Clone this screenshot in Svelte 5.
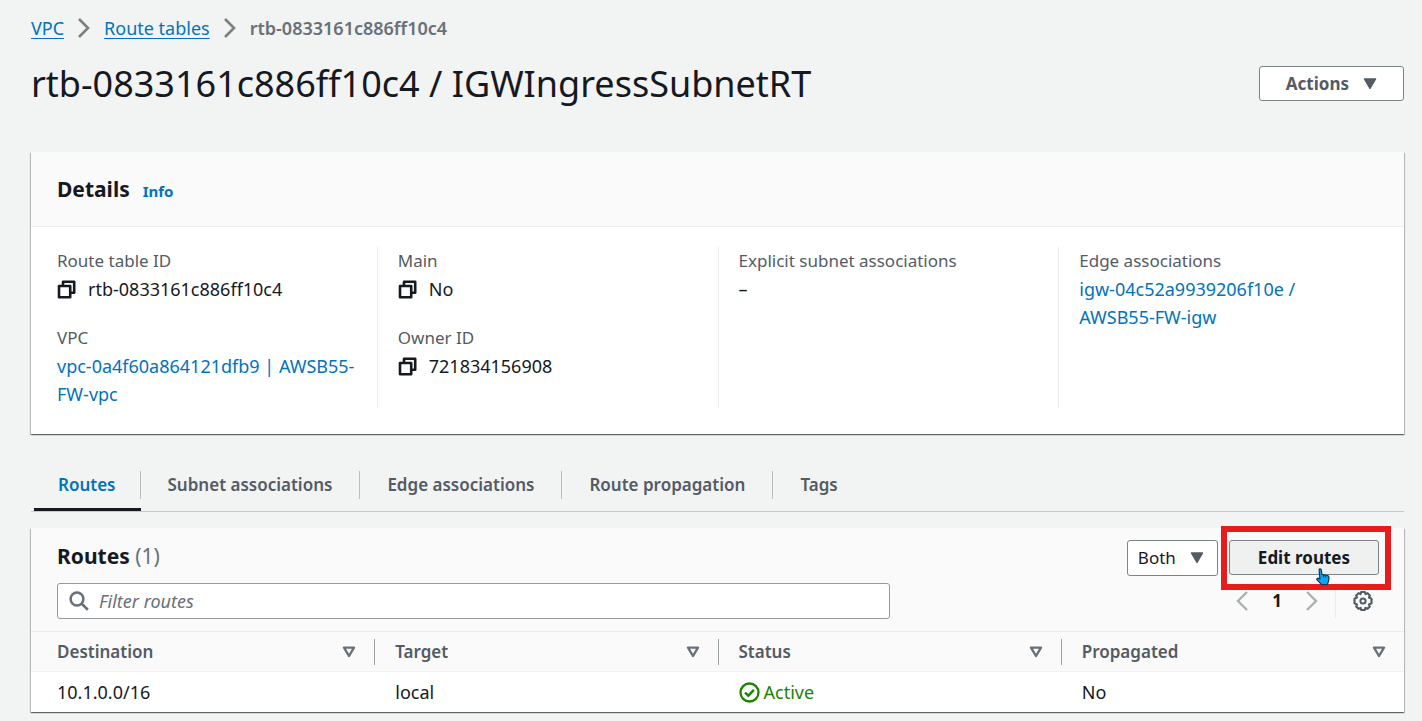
<script>
  const tabs = ['Routes', 'Subnet associations', 'Edge associations', 'Route propagation', 'Tags'];
  const columns = ['Destination', 'Target', 'Status', 'Propagated'];
  let active = $state('Routes');
  let direction = $state('Both');
  let filter = $state('');
</script>

{#snippet chevron()}
  <svg class="chevron" width="12" height="20" viewBox="0 0 12 20" aria-hidden="true"><path d="M1 1l9 9-9 9" fill="none" stroke="#7a8082" stroke-width="2.6" /></svg>
{/snippet}

{#snippet caret()}
  <svg class="caret" width="14" height="12" viewBox="0 0 14 12" aria-hidden="true"><path d="M1.4 1h11.2L7 10.4z" fill="#545b64" stroke="#545b64" stroke-width="1.4" stroke-linejoin="round" /></svg>
{/snippet}

{#snippet copy(label)}
  <button class="copy" aria-label={label}>
    <svg width="19" height="19" viewBox="0 0 19 19" aria-hidden="true">
      <path d="M6 5V1.800h11.200v11H14M2 6h11.200v11.200H2z" fill="none" stroke="#16191f" stroke-width="2.600" stroke-linejoin="round" />
    </svg>
  </button>
{/snippet}

<main>
  <nav class="crumbs" aria-label="Breadcrumb">
    <a href="#vpc">VPC</a>
    {@render chevron()}
    <a href="#route-tables">Route tables</a>
    {@render chevron()}
    <span>rtb-0833161c886ff10c4</span>
  </nav>

  <header class="title">
    <h1>rtb-0833161c886ff10c4 / IGWIngressSubnetRT</h1>
    <button class="button actions">Actions {@render caret()}</button>
  </header>

  <section class="card">
    <div class="card-head">
      <h2>Details</h2>
      <a class="info" href="#info">Info</a>
    </div>
    <div class="details">
      <dl>
        <div>
          <dt>Route table ID</dt>
          <dd class="copyable">{@render copy('Copy route table ID')}rtb-0833161c886ff10c4</dd>
        </div>
        <div>
          <dt>VPC</dt>
          <dd><a href="#vpc-id">vpc-0a4f60a864121dfb9 | AWSB55-<wbr />FW-vpc</a></dd>
        </div>
      </dl>
      <dl>
        <div>
          <dt>Main</dt>
          <dd class="copyable">{@render copy('Copy main')}No</dd>
        </div>
        <div>
          <dt>Owner ID</dt>
          <dd class="copyable">{@render copy('Copy owner ID')}721834156908</dd>
        </div>
      </dl>
      <dl>
        <div>
          <dt>Explicit subnet associations</dt>
          <dd>–</dd>
        </div>
      </dl>
      <dl>
        <div>
          <dt>Edge associations</dt>
          <dd><a href="#igw">igw-04c52a9939206f10e /<br />AWSB55-FW-igw</a></dd>
        </div>
      </dl>
    </div>
  </section>

  <div class="tabs" role="tablist">
    {#each tabs as tab}
      <button role="tab" aria-selected={active === tab} class:active={active === tab} onclick={() => (active = tab)}><span>{tab}</span></button>
    {/each}
  </div>

  <section class="card">
    <div class="tools">
      <h2>Routes <span class="count">(1)</span></h2>
      <div class="controls">
        <div class="select">
          <select bind:value={direction} aria-label="Routes shown">
            <option>Both</option>
            <option>Edge</option>
          </select>
          {@render caret()}
        </div>
        <div class="marked">
          <button class="button edit">Edit routes</button>
          <div class="frame"></div>
          <svg class="pointer" width="14" height="18" viewBox="0 0 14 18" aria-hidden="true">
            <path d="M3.1 1.8c0-1.4 2-1.4 2.2 0l.6 4.6 5.6 1.1c1.2.3 1.6 1 1.5 2.1l-.6 4.2-1.2 2.9H5.6L1.1 11.9c-.8-1 .2-2 1.3-1.6l1.5.9z" fill="#0aa5f5" stroke="#12384f" stroke-width="1.2" stroke-linejoin="round" />
            <path d="M7.6 7v2.4M9.8 7.4v2.2" stroke="#12384f" stroke-width=".9" />
          </svg>
        </div>
      </div>
    </div>
    <div class="filter-row">
      <label class="filter">
        <svg width="20" height="20" viewBox="0 0 20 20" aria-hidden="true"><circle cx="8" cy="8" r="6.4" fill="none" stroke="#687078" stroke-width="2.5" /><path d="M12.6 12.6l6.2 6.2" stroke="#687078" stroke-width="2.7" /></svg>
        <input type="text" placeholder="Filter routes" aria-label="Filter routes" bind:value={filter} />
      </label>
      <div class="pager">
        <button aria-label="Previous page"><svg width="12" height="20" viewBox="0 0 12 20"><path d="M11 1l-9 9 9 9" fill="none" stroke="#aab1b3" stroke-width="2.4" /></svg></button>
        <span>1</span>
        <button aria-label="Next page"><svg width="12" height="20" viewBox="0 0 12 20"><path d="M1 1l9 9-9 9" fill="none" stroke="#aab1b3" stroke-width="2.4" /></svg></button>
        <button class="gear" aria-label="Preferences">
          <svg width="22" height="22" viewBox="0 0 22 22">
            <path d="M9.2 2h3.6l.6 2 2.1-.8 2.3 2.3-.8 2.1 2.5 1.1v4.6l-2.5 1.1.8 2.1-2.3 2.3-2.1-.8-.6 2H9.2l-.6-2-2.1.8-2.3-2.3.8-2.1-2.5-1.1V8.7l2.5-1.1-.8-2.1 2.3-2.3 2.1.8z" fill="none" stroke="#545b64" stroke-width="2.2" stroke-linejoin="round" />
            <circle cx="11" cy="11" r="2.6" fill="none" stroke="#545b64" stroke-width="2" />
          </svg>
        </button>
      </div>
    </div>
    <table>
      <thead>
        <tr>
          {#each columns as column}
            <th scope="col">
              <div class="th">
                {column}
                <svg width="14" height="12" viewBox="0 0 14 12" aria-hidden="true"><path d="M2 1.6h10L7 10z" fill="none" stroke="#687078" stroke-width="2.4" stroke-linejoin="round" /></svg>
              </div>
            </th>
          {/each}
        </tr>
      </thead>
      <tbody>
        <tr>
          <td>10.1.0.0/16</td>
          <td>local</td>
          <td>
            <span class="status">
              <svg width="21" height="21" viewBox="0 0 21 21" aria-hidden="true"><circle cx="10.5" cy="10.5" r="9" fill="none" stroke="#1d8102" stroke-width="2.3" /><path d="M6 10.5l3.3 3.2 5.6-5.8" fill="none" stroke="#1d8102" stroke-width="2.4" /></svg>
              Active
            </span>
          </td>
          <td>No</td>
        </tr>
      </tbody>
    </table>
  </section>
</main>

<style>
  :global(body) {
    margin: 0;
    background: #f2f3f3;
  }
  main {
    box-sizing: border-box;
    padding: 14px 18px 8px 31px;
    font: 17px/28px 'Noto Sans', sans-serif;
    color: #16191f;
  }
  svg {
    display: block;
    flex: none;
  }
  a {
    color: #0073bb;
    text-decoration: none;
  }
  h1,
  h2,
  dl,
  dd {
    margin: 0;
  }
  button,
  select,
  input {
    font: inherit;
    color: inherit;
  }
  button {
    padding: 0;
    border: 0;
    background: none;
    cursor: pointer;
  }
  .crumbs,
  dd,
  td,
  .filter {
    font-size: 18px;
  }
  .crumbs {
    display: flex;
    align-items: center;
    gap: 14px;
  }
  .crumbs a {
    text-decoration: underline;
    text-underline-offset: 3px;
  }
  .crumbs span {
    font-weight: 600;
    color: #687078;
  }
  .title {
    display: flex;
    justify-content: space-between;
    align-items: center;
    margin: 18px 0 45px;
  }
  h1 {
    font-size: 36px;
    line-height: 47px;
    font-weight: 400;
  }
  h2 {
    font-size: 21px;
    line-height: 28px;
    font-weight: 700;
  }
  .button {
    display: flex;
    align-items: center;
    justify-content: center;
    box-sizing: border-box;
    height: 35px;
    padding: 0 26px;
    border: 1px solid #7d8488;
    border-radius: 3px;
    background: #fff;
    font-weight: 700;
    color: #545b64;
    gap: 14px;
  }
  .card {
    background: #fff;
    box-shadow: 0 1px 1px #00000060, 1px 1px 1px #00000030, -1px 1px 1px #00000030;
  }
  .card-head {
    display: flex;
    align-items: baseline;
    gap: 13px;
    padding: 23px 26px 21px;
    background: #fafafa;
    border-bottom: 1px solid #eaeded;
  }
  .info {
    font-size: 15px;
    font-weight: 700;
  }
  .details {
    display: grid;
    grid-template-columns: repeat(4, 1fr);
    padding: 20px 5px 26px;
  }
  dl {
    display: grid;
    align-content: start;
    gap: 21px;
    padding: 0 20px;
    border-left: 1px solid #eaeded;
  }
  dl:first-child {
    border-color: transparent;
  }
  dt {
    color: #545b64;
  }
  .copyable {
    display: flex;
    align-items: center;
    gap: 12px;
  }
  .tabs {
    display: flex;
    margin-top: 24px;
    padding: 0 3px;
    border-bottom: 1px solid #c5cacb;
  }
  .tabs button {
    padding: 13px 0 9px;
    border-bottom: 3px solid transparent;
    font-weight: 600;
    color: #545b64;
  }
  .tabs span {
    display: block;
    padding: 0 27px;
    border-right: 1px solid #b9bfc0;
  }
  .tabs button:first-child span {
    padding: 0 24px;
  }
  .tabs button:last-child span {
    border: 0;
  }
  .tabs .active {
    color: #0073bb;
    border-color: #16191f;
  }
  .tabs + .card {
    margin-top: 16px;
  }
  .tools,
  .filter-row {
    display: flex;
    justify-content: space-between;
    background: #fafafa;
    padding: 12px 25px 7px 26px;
  }
  .tools h2 {
    padding-top: 2px;
  }
  .count {
    font-weight: 400;
    color: #687078;
  }
  .controls {
    display: flex;
    gap: 11px;
  }
  .select {
    display: grid;
    align-items: center;
  }
  .select > :global(*) {
    grid-area: 1 / 1;
  }
  select {
    appearance: none;
    box-sizing: border-box;
    width: 91px;
    height: 36px;
    padding: 0 10px;
    border: 1px solid #7d8488;
    border-radius: 3px;
    background: #fff;
  }
  .select .caret {
    justify-self: end;
    margin-right: 14px;
    pointer-events: none;
  }
  .marked {
    position: relative;
  }
  .edit {
    padding: 0 28px;
    background: #eff0f0;
    color: #16191f;
  }
  .frame {
    position: absolute;
    inset: -14px -12px -14px -8px;
    border: 6px solid #e81b1d;
    pointer-events: none;
  }
  .pointer {
    position: absolute;
    left: 87px;
    top: 28px;
    pointer-events: none;
  }
  .filter-row {
    align-items: center;
    padding: 0 25px 12px 26px;
    border-bottom: 1px solid #eaeded;
  }
  .filter {
    display: flex;
    align-items: center;
    gap: 10px;
    box-sizing: border-box;
    width: 63%;
    height: 36px;
    padding: 0 11px;
    border: 1px solid #949a9d;
    border-radius: 3px;
    background: #fff;
  }
  input {
    flex: 1;
    min-width: 0;
    padding: 0;
    border: 0;
    outline: 0;
    background: none;
  }
  input::placeholder {
    color: #687078;
    font-style: italic;
    opacity: 1;
  }
  .pager {
    display: flex;
    align-items: center;
    gap: 24px;
    padding-right: 5px;
    font-weight: 700;
  }
  .gear {
    margin-left: -7px;
    padding: 6px 0 6px 16px;
    border-left: 1px solid #eaeded;
  }
  table {
    width: 100%;
    table-layout: fixed;
    border-collapse: collapse;
    text-align: left;
  }
  thead {
    background: #fafafa;
  }
  th {
    padding: 7px 0 6px;
    border-bottom: 1px solid #f0f1f1;
    color: #545b64;
    font-weight: 600;
  }
  .th {
    display: flex;
    align-items: center;
    justify-content: space-between;
    padding: 0 18px 0 20px;
    line-height: 26px;
    border-left: 1px solid #9ba1a3;
  }
  th:first-child .th {
    padding-left: 25px;
    border-color: transparent;
  }
  td {
    padding: 6px 0 6px 21px;
  }
  td:first-child {
    padding-left: 26px;
  }
  .status {
    display: flex;
    align-items: center;
    gap: 4px;
    color: #1d8102;
  }
</style>
